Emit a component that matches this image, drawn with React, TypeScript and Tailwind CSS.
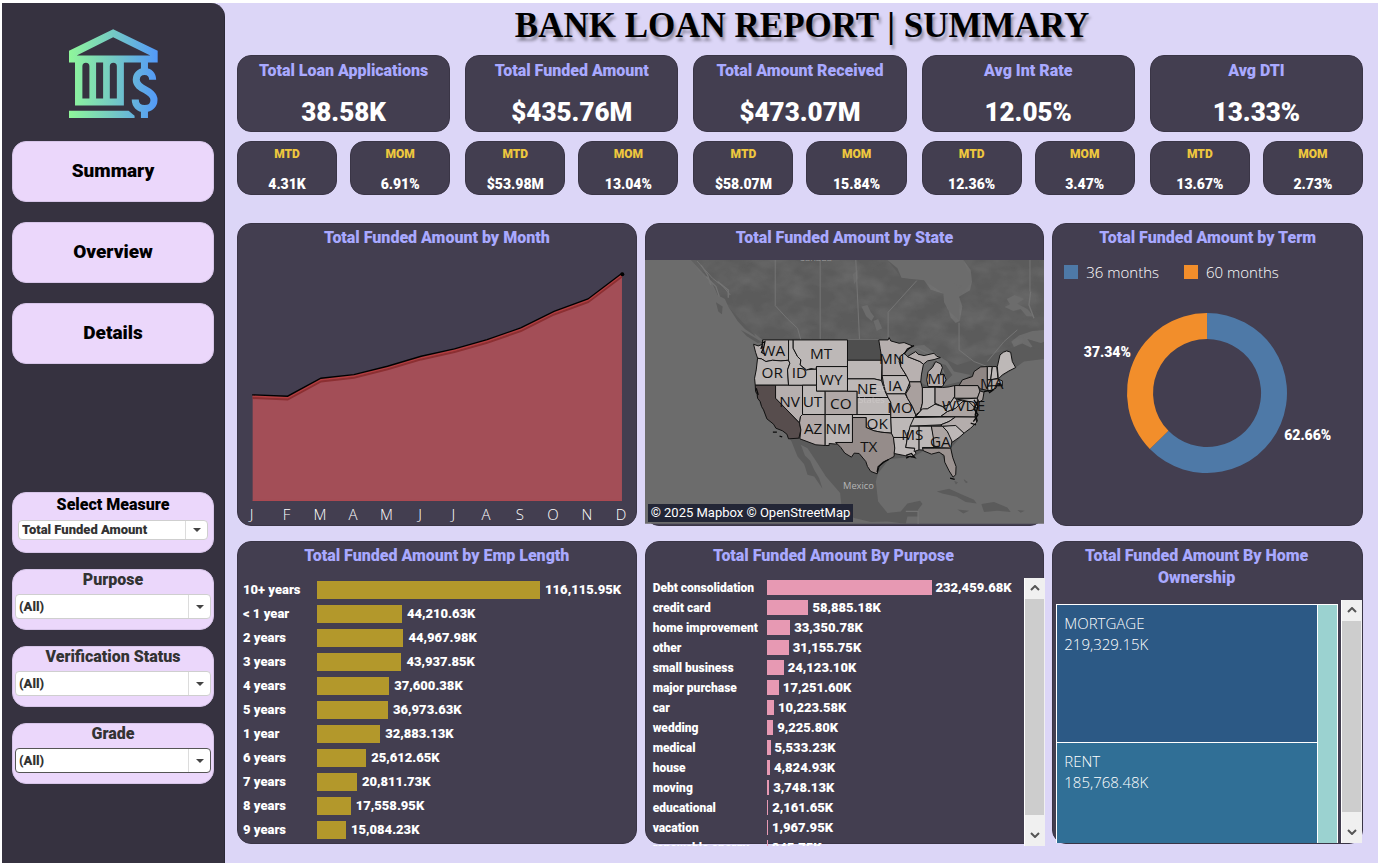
import React from "react";

const display = "font-['Roboto','Lato',sans-serif] font-black";
const book = "font-['Open_Sans','Noto_Sans',sans-serif]";

const kpis = [
  { title: "Total Loan Applications", value: "38.58K", mtd: "4.31K", mom: "6.91%" },
  { title: "Total Funded Amount", value: "$435.76M", mtd: "$53.98M", mom: "13.04%" },
  { title: "Total Amount Received", value: "$473.07M", mtd: "$58.07M", mom: "15.84%" },
  { title: "Avg Int Rate", value: "12.05%", mtd: "12.36%", mom: "3.47%" },
  { title: "Avg DTI", value: "13.33%", mtd: "13.67%", mom: "2.73%" },
];

const empLength: [string, number][] = [
  ["10+ years", 116115.95],
  ["< 1 year", 44210.63],
  ["2 years", 44967.98],
  ["3 years", 43937.85],
  ["4 years", 37600.38],
  ["5 years", 36973.63],
  ["1 year", 32883.13],
  ["6 years", 25612.65],
  ["7 years", 20811.73],
  ["8 years", 17558.95],
  ["9 years", 15084.23],
];

const purposes: [string, number][] = [
  ["Debt consolidation", 232459.68],
  ["credit card", 58885.18],
  ["home improvement", 33350.78],
  ["other", 31155.75],
  ["small business", 24123.1],
  ["major purchase", 17251.6],
  ["car", 10223.58],
  ["wedding", 9225.8],
  ["medical", 5533.23],
  ["house", 4824.93],
  ["moving", 3748.13],
  ["educational", 2161.65],
  ["vacation", 1967.95],
  ["renewable energy", 845.75],
];

const thousands = (n: number) =>
  n.toLocaleString("en-US", { minimumFractionDigits: 2, maximumFractionDigits: 2 }) + "K";

function Logo() {
  return (
    <svg viewBox="206 88 266 266" className="mx-auto block size-[89px]" role="img" aria-label="Bank">
      <defs>
        <linearGradient id="bank" gradientUnits="userSpaceOnUse" x1="206" y1="0" x2="472" y2="0">
          <stop offset="0" stopColor="#8ff79a" />
          <stop offset="0.5" stopColor="#74c9c4" />
          <stop offset="1" stopColor="#5399fa" />
        </linearGradient>
      </defs>
      <g fill="url(#bank)">
        <path
          fillRule="evenodd"
          d="M338 89 471 153V188H370V317H224V188H206V153ZM338 113 229 167H449ZM246 199V296H267V199A10.500 10.500 0 0 0 246 199ZM287 188V296H308V188ZM328 199V296H349V199A10.500 10.500 0 0 0 328 199Z"
        />
        <path d="M206 332H384L402 347V354H206Z" />
        <path d="M421 186H442V214H421ZM421 328H442V354H421Z" />
      </g>
      <path
        d="M456 240C456 224 446 215 432 215C417 215 407 226 407 240C407 271 460 268 460 300C460 315 448 326 432 326C415 326 404 315 404 299"
        fill="none"
        stroke="url(#bank)"
        strokeWidth="21"
      />
    </svg>
  );
}

function Filter({ id, label, option, compact, focused }: { id: string; label: string; option: string; compact?: boolean; focused?: boolean }) {
  return (
    <div className={`h-[61px] rounded-[14px] border border-[#d6c4e8] bg-[#ebd7fb] ${compact ? "px-[5px]" : "px-0.5"}`}>
      <label
        htmlFor={id}
        className={`block text-center text-base ${compact ? "leading-6 text-black" : "leading-5 text-[#333]"} ${display}`}
      >
        {label}
      </label>
      <div className={`relative ${compact ? "mt-[3px]" : "mt-1"}`}>
        <select
          id={id}
          className={`block w-full appearance-none rounded-sm border bg-white pl-[3px] text-[13px] leading-4 text-[#333] ${
            compact ? "h-5" : "h-[25px]"
          } ${focused ? "border-[#555]" : "border-[#cfcfcf]"} ${display}`}
        >
          <option>{option}</option>
        </select>
        <span className="pointer-events-none absolute inset-y-px right-px flex w-[22px] items-center justify-center border-l border-[#dcdcdc]">
          <svg viewBox="0 0 8 4" className="h-1 w-2" aria-hidden="true">
            <path d="M0 0H8L4 4Z" fill="#444" />
          </svg>
        </span>
      </div>
    </div>
  );
}

function Panel({ title, scrolls, children }: { title: string; scrolls?: boolean; children: React.ReactNode }) {
  return (
    <section className="flex min-w-0 flex-col rounded-[14px] border border-[#3a3546] bg-[#433e50]">
      <h2
        className={`shrink-0 pt-[3px] pb-[11px] text-center text-base leading-[22px] text-[#a9a9ff] ${
          scrolls ? "pr-[42px] pl-5" : "px-6"
        } ${display}`}
      >
        {title}
      </h2>
      {children}
    </section>
  );
}

function ScrollBar({ size }: { size: string }) {
  return (
    <div className={`flex w-[21px] shrink-0 flex-col border-l border-white bg-[#f0f0f0] ${size}`}>
      <button aria-label="Scroll up" className="flex h-[21px] shrink-0 items-center justify-center">
        <svg viewBox="0 0 10 6" className="h-1.5 w-2.5">
          <path d="M1 5 5 1 9 5" fill="none" stroke="#555" strokeWidth="2" />
        </svg>
      </button>
      <div className="mr-px flex-1 bg-[#cdcdcd]" />
      <button aria-label="Scroll down" className="mt-2.5 flex h-[21px] shrink-0 items-center justify-center">
        <svg viewBox="0 0 10 6" className="h-1.5 w-2.5">
          <path d="M1 1 5 5 9 1" fill="none" stroke="#555" strokeWidth="2" />
        </svg>
      </button>
    </div>
  );
}

const monthX = [66, 171, 271, 370, 471, 572, 672, 770, 871, 971, 1073, 1175];
const monthY = [540, 544, 490, 479, 454, 424, 402, 374, 339, 289, 252, 175];
const monthNames = ["J", "F", "M", "A", "M", "J", "J", "A", "S", "O", "N", "D"];

function MonthChart() {
  const line = monthX.map((x, i) => `${x},${monthY[i]}`).join(" ");
  const inner = monthX.map((x, i) => `${x},${monthY[i] + 9}`).join(" ");
  return (
    <svg viewBox="22 135 1194 792" className="block w-full" role="img" aria-label="Funded amount by month">
      <polygon points={`${line} 1175,857 66,857`} fill="#a34e57" />
      <path d="M66 857H1175" stroke="#b04a52" strokeWidth="3" />
      <polyline points={inner} fill="none" stroke="#8b2f32" strokeWidth="7" />
      <polyline points={monthX.map((x, i) => `${x},${monthY[i] + 4}`).join(" ")} fill="none" stroke="#b23e40" strokeWidth="5" />
      <polyline points={line} fill="none" stroke="#000" strokeWidth="4" strokeLinecap="round" />
      <circle cx="1176" cy="178" r="6" />
      {monthNames.map((m, i) => (
        <text key={i} x={monthX[i] - 3} y="915" textAnchor="middle" fontSize="45" fontWeight="300" fill="#fff" className={book}>
          {m}
        </text>
      ))}
    </svg>
  );
}

const base = "#bdb8b7";
const states: [string, string][] = [
  ["338,388 352,393 365,388 365,375 443,375 443,436 420,438 395,436 375,440 362,432 350,430 344,412", "#b9b2b1"],
  ["350,430 362,432 375,440 395,436 420,438 443,436 447,445 440,465 443,511 343,511 341,490 346,465", "#bbb6b5"],
  ["343,511 404,511 404,550 476,624 480,645 474,670 443,672 438,658 425,648 405,640 398,628 378,612 368,585 362,575 358,560 350,550 349,538 344,530", "#574d4d"],
  ["404,511 485,511 485,600 479,605 476,624 404,550", "#b6afae"],
  ["443,375 457,375 457,400 470,425 480,435 478,450 495,465 527,462 527,511 443,511 440,465 447,445 443,436", base],
  ["457,375 620,375 620,455 527,455 525,463 510,461 497,465 478,450 480,435 470,425 457,400", base],
  ["527,455 620,455 620,529 527,529", base],
  ["485,511 527,511 527,529 553,529 553,599 485,599", base],
  ["553,529 649,529 649,599 553,599", "#b0a8a7"],
  ["485,599 553,599 553,692 525,690 477,672 480,645 476,624 479,605", "#b2a9a8"],
  ["553,599 635,599 635,683 585,683 588,688 565,686 565,692 553,692", base],
  ["620,436 724,436 722,497 700,492 620,492", base],
  ["620,492 700,492 722,497 733,530 742,548 649,548 649,529 620,529", base],
  ["649,548 742,548 750,562 750,599 649,599", base],
  ["635,599 750,599 752,655 720,652 700,648 676,638 676,608 635,608", base],
  ["635,608 676,608 676,638 700,648 720,652 752,655 759,668 762,700 760,725 745,733 735,738 715,755 709,777 690,770 680,755 675,740 655,716 640,715 632,727 612,715 600,698 585,683 635,683", "#958c8a"],
  ["714,375 742,375 745,368 750,378 775,385 790,383 815,393 790,415 778,425 775,440 780,455 797,482 724,482 724,436 718,400", "#b6afae"],
  ["724,482 797,482 808,500 800,520 793,537 737,537 728,505", base],
  ["737,537 793,537 800,550 815,575 825,600 822,608 750,608 750,562 742,548", "#b8b1b0"],
  ["750,608 822,608 812,635 800,655 800,668 758,668 752,655", base],
  ["758,668 800,668 795,698 822,700 825,716 815,727 790,722 760,716 762,700", base],
  ["778,425 790,415 800,425 825,435 838,440 848,448 842,480 840,501 806,501 797,482 780,455", "#b8b1b0"],
  ["806,501 840,501 845,520 845,565 838,590 825,600 815,575 800,550 795,537 808,515", "#a9a09e"],
  ["800,425 825,410 832,418 850,422 880,415 888,424 899,428 880,434 860,438 848,448 838,440", "#b5aead"],
  ["862,515 858,495 862,470 875,458 885,440 900,447 905,458 898,480 910,478 916,495 905,515", "#b5aead"],
  ["845,518 883,517 883,570 860,582 840,585 845,565", base],
  ["883,517 905,518 925,516 942,512 942,545 925,570 905,575 883,565", "#b0a8a7"],
  ["825,605 845,582 860,582 883,568 905,575 920,590 900,605", base],
  ["820,608 945,606 925,620 900,630 808,634", base],
  ["808,634 835,634 835,705 820,710 822,700 795,698 800,668", base],
  ["835,634 872,634 880,670 880,698 845,698 850,706 835,705", base],
  ["872,634 905,634 920,650 935,672 930,700 880,698 878,670", "#aca4a2"],
  ["845,700 880,700 930,700 936,728 946,755 945,780 937,787 925,768 912,742 910,722 895,712 872,718 848,708", "#9b9290"],
  ["905,634 945,630 970,655 955,668 935,682 920,650", base],
  ["900,630 925,620 945,606 1003,606 1008,622 990,640 970,655 945,632 905,634", "#b4adac"],
  ["900,605 920,590 945,580 960,560 985,560 998,572 1005,590 1003,606", "#aca4a2"],
  ["905,575 925,570 942,545 950,560 975,553 960,565 945,580 920,590", base],
  ["942,512 1012,512 1018,530 1010,550 942,550", "#a9a19f"],
  ["955,512 965,495 995,485 1000,470 1020,456 1040,455 1040,500 1043,527 1018,522 1012,512", "#8f8684"],
  ["1040,455 1055,455 1050,495 1040,495", base],
  ["1055,455 1068,455 1072,490 1050,495", base],
  ["1070,455 1078,420 1088,412 1098,408 1110,412 1115,440 1125,458 1105,468 1085,480 1073,492", base],
  ["1040,495 1070,492 1085,498 1085,512 1075,505 1068,512 1040,514", "#b1a9a8"],
  ["1040,514 1068,512 1066,520 1043,530", base],
  ["1018,528 1030,532 1026,555 1015,562 1010,550", "#a9a19f"],
  ["950,553 1010,550 1010,580 998,574 985,560 965,556", base],
];

const stateLabels: [string, number, number][] = [
  ["WA", 397, 423], ["MT", 541, 432], ["OR", 394, 489], ["ID", 476, 489], ["WY", 571, 510], ["MN", 753, 447],
  ["NE", 679, 538], ["IA", 763, 529], ["MI", 887, 508], ["NV", 446, 576], ["UT", 515, 576], ["CO", 600, 582],
  ["MO", 778, 594], ["AZ", 517, 657], ["NM", 592, 657], ["OK", 709, 643], ["MS", 815, 675], ["GA", 899, 697],
  ["TX", 684, 711], ["WV", 939, 588], ["DE", 1004, 588], ["MA", 1053, 522],
];

function StateMap() {
  return (
    <div className="relative -mx-px">
      <svg viewBox="12 135 1200 792" className="block w-full" role="img" aria-label="Funded amount by state">
        <defs>
          <filter id="terrain" x="0" y="0" width="1" height="1">
            <feTurbulence type="fractalNoise" baseFrequency="0.012 0.018" numOctaves="3" seed="7" />
            <feColorMatrix values="0 0 0 0 0.25  0 0 0 0 0.25  0 0 0 0 0.25  0.600 0 0 0 -0.220" />
            <feComposite in2="SourceGraphic" operator="in" />
          </filter>
        </defs>
        <rect x="12" y="135" width="1200" height="792" fill="#6c6c6c" />
        <path
          fill="#5b5b5b"
          d="M150 135 168 155 190 178 212 200 230 240 252 252 262 275 290 318 312 342 345 365 365 385 345 392 350 430 341 490 345 540 378 612 438 658 452 680 470 725 490 748 500 780 520 785 545 822 535 790 520 765 508 738 492 722 480 690 500 700 530 745 555 785 598 835 603 885 640 910 690 922 740 920 795 927 800 905 832 905 832 885 845 868 838 858 800 866 780 890 740 895 712 860 705 800 712 775 745 733 820 725 850 708 900 715 937 787 946 755 930 700 970 655 1005 622 1018 560 1030 532 1085 510 1073 492 1125 458 1150 440 1212 432V380L1170 398 1145 386 1120 396 1112 380 1135 362 1175 348 1212 345V135H968L990 165 994 200 988 226 955 245 965 275 957 318 945 324 930 308 924 288 910 262 908 236 870 224 850 196 812 192 782 188 770 160 740 135Z"
        />
        <path
          filter="url(#terrain)"
          fill="#000"
          d="M150 135 230 240 262 275 345 365 620 375 850 400 950 450 1120 396 1212 345V135H968L994 200 955 245 957 318 924 288 908 236 850 196 782 188 740 135Z"
        />
        <g fill="#6c6c6c">
          <path d="M1098 252 1122 240 1150 252 1130 266 1160 282 1180 305 1158 304 1140 282 1118 288 1092 276 1108 268Z" />
          <path d="M662 275 680 270 690 292 700 305 692 318 676 304Z M698 318 712 312 724 340 708 348Z M636 178 650 165 652 190 640 208Z" />
          <path d="M845 450 838 501 862 515 858 478 880 440 915 450 935 480 900 515 960 500 990 480 940 470 920 440 890 420 850 390 800 395 780 425 850 430Z" />
          <path d="M340 355 372 380 360 400 352 385Z M940 205 962 212 955 222Z" />
        </g>
        <g fill="#5b5b5b">
          <path d="M888 830 925 822 960 838 1000 855 1008 866 975 862 948 846 905 836Z M1022 868 1060 862 1100 878 1110 892 1070 888 1030 892Z M950 884 985 888 968 896Z M1130 886 1152 888 1140 894Z M225 262 245 275 243 298 232 290Z M300 345 330 362 364 382 350 384 318 364Z M1160 372 1212 388V400L1180 402Z" />
          <path d="M942 800 950 803 946 808ZM970 795 980 802 976 804Z" stroke="#5b5b5b" strokeWidth="2" />
        </g>
        <g fill="none" stroke="#747474" strokeWidth="3">
          <path d="M403 135V272L440 312 470 340 480 375M538 135V372M645 135 656 372M742 372V292L828 197M955 324V405L1000 440 1040 455M620 375H716M168 138 215 190 246 214 268 240M1168 135V230M1130 345 1090 380 1040 440" />
          <path d="M1170 230 1165 270 1180 310M180 150 200 180 210 210M195 185 225 215 235 245M230 200 262 225 262 248" strokeWidth="4" />
          <path d="M786 420 830 400 880 425 900 450 915 490M795 890H832V927" strokeWidth="4" />
        </g>
        <text x="524" y="137" textAnchor="middle" fontSize="28" fill="#989898" className={book}>Canada</text>
        <path d="M620 375H716L724 436H620Z" fill="#4e4e4e" />
        {states.map(([points, fill], i) => (
          <polygon key={i} points={points} fill={fill} stroke="#111" strokeWidth="3" strokeLinejoin="round" />
        ))}
        <path
          d="M362 385 372 380 368 400 362 412 372 418M365 388 360 402M396 652H408M416 664 424 666M1000 555 1012 575 1004 598 1010 620M1010 560 1000 582 1012 600 998 620M1030 530 1060 524 1045 534M1070 505 1085 514M820 392 800 402 790 418M796 722 812 716 822 728 808 724 796 730M990 625 1006 630M346 520 352 540M744 734 728 742 712 756 709 772M928 790 942 794"
          fill="none"
          stroke="#0a0a0a"
          strokeWidth="4"
        />
        <g fill="#d9d4d3" fontSize="28" textAnchor="middle" opacity="0.500" className={book}>
          <text x="695" y="529">United</text>
          <text x="692" y="564">States</text>
        </g>
        <g fill="#111" fontSize="46" textAnchor="middle" className={book}>
          {stateLabels.map(([s, x, y]) => (
            <text key={s} x={x} y={y}>{s}</text>
          ))}
        </g>
        <text x="653" y="823" textAnchor="middle" fontSize="28" fill="#b5b5b5" className={book}>Mexico</text>
      </svg>
      <p className="absolute bottom-0.5 left-[3px] bg-[#232636] px-[3px] font-['Roboto',sans-serif] text-[13px] leading-[18px] whitespace-nowrap text-white">
        © 2025 Mapbox © OpenStreetMap
      </p>
    </div>
  );
}

function TermChart() {
  return (
    <>
      <ul className={`flex gap-[25px] pl-[11px] text-[15px] leading-6 font-light text-white ${book}`}>
        <li className="flex items-center gap-2">
          <span className="size-3.5 bg-[#4e79a7]" />
          36 months
        </li>
        <li className="flex items-center gap-2">
          <span className="size-3.5 bg-[#f28e2b]" />
          60 months
        </li>
      </ul>
      <svg viewBox="25 207 926 722" className="block w-full" role="img" aria-label="Funded amount by term">
        <path d="M487 294A240 240 0 1 1 315.500 702L371.300 647.300A162 162 0 1 0 487 372Z" fill="#4e79a7" />
        <path d="M487 294A240 240 0 0 0 315.500 702L371.300 647.300A162 162 0 0 1 487 372Z" fill="#f28e2b" />
        <g fill="#fff" fontSize="42" textAnchor="middle" className={display}>
          <text x="188" y="425">37.34%</text>
          <text x="789" y="674">62.66%</text>
        </g>
      </svg>
    </>
  );
}

export default function App() {
  return (
    <div className="flex min-h-screen bg-white pt-[3px] pr-[5px] pb-[5px] pl-0.5">
      <div className="flex w-full bg-[#dcd6f7]">
        <aside className="w-[223px] shrink-0 rounded-tr-[14px] border-r border-[#2b2835] bg-[#363240] px-[10px] pt-[26px]">
          <Logo />
          <nav className="mt-[23px] flex flex-col gap-5">
            {["Summary", "Overview", "Details"].map((n) => (
              <button
                key={n}
                className={`h-[61px] rounded-[14px] border border-[#d6c4e8] bg-[#ebd7fb] text-[19px] text-black ${display}`}
              >
                {n}
              </button>
            ))}
          </nav>
          <div className="mt-32 flex flex-col gap-4">
            <Filter id="measure" label="Select Measure" option="Total Funded Amount" compact />
            <Filter id="purpose" label="Purpose" option="(All)" />
            <Filter id="status" label="Verification Status" option="(All)" />
            <Filter id="grade" label="Grade" option="(All)" focused />
          </div>
        </aside>

        <main className="min-w-0 flex-1 pr-[15px] pl-3">
          <h1 className="h-[52px] pl-1 text-center font-['Liberation_Serif',serif] text-[35px] leading-[46px] font-bold whitespace-nowrap text-black [text-shadow:2px_4px_3px_rgba(0,0,0,0.350)]">
            BANK LOAN REPORT | SUMMARY
          </h1>

          <div className="grid grid-cols-5 gap-[15px]">
            {kpis.map((k) => (
              <section key={k.title} className={`min-w-0 text-center text-white ${display}`}>
                <div className="h-[77px] rounded-[14px] border border-[#3a3546] bg-[#433e50] pt-1">
                  <h2 className="text-base leading-[22px] whitespace-nowrap text-[#a9a9ff]">{k.title}</h2>
                  <p className="pt-[14px] text-[26px] leading-8">{k.value}</p>
                </div>
                <div className="mt-[9px] grid grid-cols-2 gap-[13px]">
                  {[["MTD", k.mtd], ["MOM", k.mom]].map(([label, value]) => (
                    <div key={label} className="h-[54px] rounded-[14px] border border-[#3a3546] bg-[#433e50] pt-[3px]">
                      <h3 className="text-xs leading-[18px] text-[#eec73e]">{label}</h3>
                      <p className="pt-3 text-sm leading-[18px]">{value}</p>
                    </div>
                  ))}
                </div>
              </section>
            ))}
          </div>

          <div className="mt-7 grid grid-cols-[400fr_400fr_311fr] gap-x-2 gap-y-[15px]">
            <Panel title="Total Funded Amount by Month">
              <MonthChart />
            </Panel>
            <Panel title="Total Funded Amount by State">
              <StateMap />
            </Panel>
            <Panel title="Total Funded Amount by Term">
              <TermChart />
            </Panel>

            <Panel title="Total Funded Amount by Emp Length">
              <ul className={`pl-[5px] text-[13px] text-white ${display}`}>
                {empLength.map(([label, value]) => (
                  <li key={label} className="grid h-6 grid-cols-[74px_1fr] items-center">
                    <span>{label}</span>
                    <span className="flex items-center gap-[5px]">
                      <span className="h-[18px] shrink-0 bg-[#b3982b]" style={{ width: `${(value / 116115.95) * 70}%` }} />
                      {thousands(value)}
                    </span>
                  </li>
                ))}
              </ul>
            </Panel>
            <Panel title="Total Funded Amount By Purpose" scrolls>
              <div className="-mr-0.5 -mb-[3px] flex h-[268px]">
                <ul className={`min-w-0 flex-1 overflow-hidden pl-[7px] text-[13px] text-white ${display}`}>
                  {purposes.map(([label, value]) => (
                    <li key={label} className="grid h-5 grid-cols-[114px_1fr] items-center whitespace-nowrap">
                      <span className="text-xs">{label}</span>
                      <span className="flex items-center gap-1">
                        <span className="h-[15px] min-w-px shrink-0 bg-[#e799b3]" style={{ width: `${(value / 232459.68) * 64}%` }} />
                        {thousands(value)}
                      </span>
                    </li>
                  ))}
                </ul>
                <ScrollBar size="h-full" />
              </div>
            </Panel>
            <Panel title="Total Funded Amount By Home Ownership" scrolls>
              <div className={`flex flex-1 pl-[3px] font-light text-white ${book}`}>
                <div className="mt-1 mr-[3px] grid min-w-0 flex-1 grid-cols-[1fr_19px] gap-px border-x border-t border-white bg-white text-[15px] leading-[21px]">
                  <div className="grid grid-rows-[137fr_100fr] gap-px">
                    <div className="bg-[#2c5985] pt-2 pl-[7px]">
                      MORTGAGE
                      <br />
                      219,329.15K
                    </div>
                    <div className="bg-[#306f96] pt-2 pl-[7px]">
                      RENT
                      <br />
                      185,768.48K
                    </div>
                  </div>
                  <div className="bg-[#9bd2d0]" />
                </div>
                <ScrollBar size="self-stretch" />
              </div>
            </Panel>
          </div>
        </main>
      </div>
    </div>
  );
}
